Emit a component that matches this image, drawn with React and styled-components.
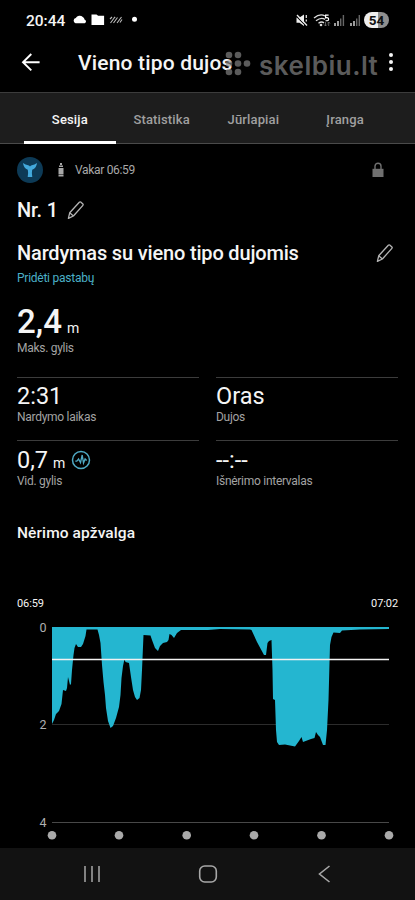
import React from "react";
import styled, { createGlobalStyle } from "styled-components";

const tabs = ["Sesija", "Statistika", "Jūrlapiai", "Įranga"];

// dive profile: x on screen, y as distance below the surface line
const profile = [
  [52, 97], [54, 93], [56, 87], [59, 84], [61.5, 77], [63, 63], [66, 64],
  [67, 61], [68, 50], [70, 58], [71, 57], [72, 43], [73.5, 28], [74.5, 21],
  [76, 17], [78, 20], [81, 20], [83, 17], [85.5, 9], [86.5, 2.5], [97.5, 2.5],
  [99, 8], [100.5, 16], [102, 38], [103.5, 55], [105, 68], [106, 81],
  [108, 94], [110.5, 101], [113, 99], [116, 91], [119, 80], [120.5, 68],
  [121.5, 51], [123, 39], [124.5, 32], [125.5, 35], [129, 36], [131, 50],
  [133, 63], [135, 70], [137, 73], [139.5, 71], [141, 63], [142, 43],
  [143.5, 8], [150.5, 8.5], [152, 13], [155, 21], [158, 24], [160, 19],
  [163, 16], [167, 15], [168.5, 13], [169.5, 7], [171.5, 8], [174, 11],
  [177, 6], [181, 3], [208, 3], [220, 2], [250, 2.5], [251.5, 3], [257, 15],
  [264, 28], [266, 28], [267.5, 16], [269, 14], [271.5, 13], [272.5, 43],
  [273, 72], [275, 73], [276, 103], [277, 115], [279, 118], [285, 117.5],
  [295, 119.5], [299, 114], [301.5, 110], [303, 115], [311, 112],
  [314.5, 111], [316, 105], [318, 108], [320, 110], [323, 118], [325.5, 118],
  [327, 103], [328.5, 73], [330, 18], [331.5, 10], [333.5, 5.5], [340, 6],
  [342, 3.5], [360, 2.5], [389, 2],
];

const SURFACE = 16;
const profilePoints = [[52, 0], ...profile, [389, 0]]
  .map(([x, y]) => `${x},${y + SURFACE}`)
  .join(" ");

const Pencil = () => (
  <svg width="18" height="20" viewBox="0 0 18 20" fill="none" stroke="#b4b4b4" strokeWidth="1.3" strokeLinejoin="round">
    <path d="M1.4 18.4 L2.7 12.8 L12.3 2.2 Q13 1.5 13.7 2.1 L15.9 4 Q16.5 4.6 15.9 5.3 L6.4 16 Z M2.7 12.8 L6.4 16" />
  </svg>
);

const StatusIcons = () => (
  <svg width="96" height="20" viewBox="294 10 96 20">
    <path d="M296.5 17.5h3l4.5-3v11.4l-4.5-3.2h-3z" fill="#eee" />
    <path d="M296 15.8l9.5 9.5" stroke="#000" strokeWidth="1.2" />
    <path d="M297 15l10 10.5" stroke="#eee" strokeWidth="1.3" />
    <path d="M306.3 15v3M306.3 19.5v2" stroke="#ddd" strokeWidth="1.3" />
    <g fill="none" stroke="#ddd" strokeWidth="1.4">
      <path d="M314 18q6-5 11-2M316 20.8q5-4 9-1.5M318.5 23.3q3-2.2 5.5-.5" />
    </g>
    <circle cx="321" cy="25" r="1.3" fill="#ddd" />
    <path d="M328.6 15.2h-3v2.6q3-.5 3 1.4t-3 1.5" stroke="#fff" strokeWidth="1.2" fill="none" />
    <path d="M325.5 22v4M324 24.5l1.5 1.5 1.5-1.5M328.7 26v-4M327.4 23.4l1.3-1.4 1.3 1.4" stroke="#777" strokeWidth=".8" fill="none" />
    <g strokeWidth="1.4">
      <path d="M335 23v3M338 21v5M351 23v3M354 21v5" stroke="#ddd" />
      <path d="M340.7 18.5V26M343.4 15v11M356.7 18.5V26M359.3 15v11" stroke="#666" />
    </g>
  </svg>
);

const NotificationIcons = () => (
  <svg width="66" height="14" viewBox="72 14 66 14">
    <path d="M75.5 24.3a2.7 2.7 0 0 1 .3-5.200 4.2 4.2 0 0 1 7-1 3 3 0 0 1 1.7 2.4 2 2 0 0 1 .2 3.8z" fill="#fff" />
    <path d="M91.5 15.5h5l1.6 1.3h6V26H91.5z" fill="#fff" />
    <path d="M110.5 24l4-5.5M113.5 24l4-5.5M117 24l4.5-6M110 20l2-2M120 23.5l2-3M114 19l1.2-1" stroke="#bbb" strokeWidth="1.1" />
    <circle cx="134.5" cy="20.3" r="2.5" fill="#fff" />
  </svg>
);

export default function App() {
  return (
    <>
      <GlobalStyle />
      <Screen>
        <StatusBar>
          <Clock>20:44</Clock>
          <NotificationIcons />
          <StatusRight>
            <StatusIcons />
            <Battery>54</Battery>
          </StatusRight>
        </StatusBar>

        <AppBar>
          <svg width="20" height="22" viewBox="0 0 20 22" fill="none" stroke="#fff" strokeWidth="1.9">
            <path d="M10.3 2 2 10.2l8.3 8.2M2 10.2h16.6" />
          </svg>
          <AppTitle>Vieno tipo dujos</AppTitle>
          <MenuDots>
            <i />
            <i />
            <i />
          </MenuDots>
          <Watermark>
            <svg width="26" height="26" viewBox="0 0 26 26" fill="#8c8c8c">
              <circle cx="4" cy="4" r="3.3" />
              <circle cx="13" cy="4" r="3.3" />
              <circle cx="4" cy="12.5" r="3.3" />
              <circle cx="13" cy="12.5" r="3.3" />
              <circle cx="22" cy="12.5" r="3.3" />
              <circle cx="4" cy="21" r="3.3" />
              <circle cx="13" cy="21" r="3.3" />
            </svg>
            <span>skelbiu.lt</span>
          </Watermark>
        </AppBar>

        <TabBar>
          {tabs.map((tab, i) => (
            <Tab key={tab} $active={i === 0}>
              {tab}
            </Tab>
          ))}
        </TabBar>

        <Content>
          <MetaRow>
            <svg width="26" height="26" viewBox="0 0 26 26">
              <circle cx="13" cy="13" r="13" fill="#0d3a56" />
              <path d="M6 6q2.500 2 5.200 2.300 1.300.2 1.800 1.200.5-1 1.800-1.200Q17.500 8 20 6q-.5 5-4.800 6.800-.7 3 .1 7.200h-4.600q.8-4.200.1-7.200Q6.500 11 6 6z" fill="#43a9dc" />
            </svg>
            <Tank width="6" height="14" viewBox="0 0 6 14" fill="#a8a8a8">
              <path d="M2 0h2v2H2zM1 2.5h4V4H1zM.5 5h5v6.5h-5zM.5 12h5v1.5h-5z" />
            </Tank>
            <MetaText>Vakar 06:59</MetaText>
            <Lock width="12" height="16" viewBox="0 0 12 16">
              <path d="M3 7.5V4.2a3 3 0 0 1 6 0v3.3" fill="none" stroke="#707070" strokeWidth="1.4" />
              <path d="M.5 6.8h11V15H.5z" fill="#707070" />
            </Lock>
          </MetaRow>

          <DiveNumber>
            <Heading>Nr. 1</Heading>
            <Pencil />
          </DiveNumber>
          <TitleRow>
            <Heading>Nardymas su vieno tipo dujomis</Heading>
            <Pencil />
          </TitleRow>
          <NotesLink>Pridėti pastabų</NotesLink>

          <MaxDepth>
            <BigValue>2,4</BigValue>
            <Unit>m</Unit>
          </MaxDepth>
          <Label $height="14px">Maks. gylis</Label>

          <Stats>
            <Stat>
              <Value>2:31</Value>
              <Label>Nardymo laikas</Label>
            </Stat>
            <Stat>
              <Value>Oras</Value>
              <Label>Dujos</Label>
            </Stat>
            <Stat $top="7px">
              <Value>
                0,7<Unit>m</Unit>
                <Pulse width="20" height="20" viewBox="0 0 20 20" fill="none" stroke="#4fa9c4" strokeWidth="1.5">
                  <circle cx="10" cy="10" r="8.5" />
                  <path d="M4.3 11.2h1.5l1.8-2.2 1.9 3.7L11.2 5l1.3 8 1.6-4 1.6 1.5" strokeWidth="1.3" />
                </Pulse>
              </Value>
              <Label>Vid. gylis</Label>
            </Stat>
            <Stat $top="7px">
              <Value>--:--</Value>
              <Label>Išnėrimo intervalas</Label>
            </Stat>
          </Stats>

          <SectionTitle>Nėrimo apžvalga</SectionTitle>
          <TimeRange>
            <span>06:59</span>
            <span>07:02</span>
          </TimeRange>
        </Content>

        <Chart width="415" height="237" viewBox="0 0 415 237">
          <path d="M52 113.5h337" stroke="#2c2c2c" />
          <path d="M52 211.5h337" stroke="#484848" />
          <path d="M52 16.5h337" stroke="#5d8f9a" />
          <polygon points={profilePoints} fill="#24b6d0" />
          <path d="M52 48.5h337" stroke="#f2f2f2" strokeWidth="1.3" />
          <text x="46.5" y="20.5">0</text>
          <text x="46.5" y="118">2</text>
          <text x="46.5" y="215.5">4</text>
          {[52, 119, 186.7, 254, 321.5, 389].map((x) => (
            <circle key={x} cx={x} cy="224.3" r="4.3" fill="#aaa" />
          ))}
        </Chart>

        <NavBar>
          <svg width="18" height="18" viewBox="0 0 18 18" stroke="#a8a8a8" strokeWidth="1.5">
            <path d="M2 1v16M9 1v16M16 1v16" />
          </svg>
          <svg width="20" height="20" viewBox="0 0 20 20" fill="none" stroke="#a8a8a8" strokeWidth="1.6">
            <rect x="1.7" y="2" width="16.6" height="16" rx="5" />
          </svg>
          <svg width="18" height="18" viewBox="0 0 18 18" fill="none" stroke="#a8a8a8" strokeWidth="1.6">
            <path d="M14.5 1 4.5 9l10 8" />
          </svg>
        </NavBar>
      </Screen>
    </>
  );
}

const GlobalStyle = createGlobalStyle`
  * {
    box-sizing: border-box;
  }
  body {
    margin: 0;
    background: #000;
    font-family: Roboto, "Noto Sans", sans-serif;
    color: #f5f5f5;
  }
  svg {
    display: block;
    flex-shrink: 0;
  }
`;

const Screen = styled.div`
  width: 415px;
  height: 900px;
  display: flex;
  flex-direction: column;
  background: #000;
  overflow: hidden;
`;

const StatusBar = styled.div`
  height: 40px;
  padding: 0 26px;
  display: flex;
  align-items: center;
`;

const Clock = styled.span`
  padding-top: 1px;
  font-size: 15.5px;
  font-weight: 500;
  line-height: 20px;
  width: 46px;
`;

const StatusRight = styled.div`
  display: flex;
  align-items: center;
  margin-left: auto;
`;

const Battery = styled.span`
  width: 25px;
  height: 16px;
  margin-left: -26px;
  border-radius: 8px;
  background: linear-gradient(90deg, #eee 54%, #8f8f8f 54%);
  color: #111;
  font-size: 13.5px;
  font-weight: 700;
  line-height: 17px;
  text-align: center;
`;

const AppBar = styled.header`
  position: relative;
  height: 52px;
  padding: 0 20px 7px 21px;
  display: flex;
  align-items: center;
`;

const AppTitle = styled.h1`
  margin: 0 0 0 37px;
  font-size: 21px;
  font-weight: 500;
  line-height: 28px;
  letter-spacing: 0.17px;
`;

const MenuDots = styled.div`
  margin-left: auto;
  padding: 0 2px 2px;
  display: flex;
  flex-direction: column;
  gap: 3px;

  i {
    width: 4px;
    height: 4px;
    border-radius: 50%;
    background: #f5f5f5;
  }
`;

const Watermark = styled.div`
  position: absolute;
  left: 225px;
  top: 11px;
  display: flex;
  opacity: 0.65;

  span {
    margin-left: 8px;
    font-family: Inter, sans-serif;
    font-size: 26px;
    font-weight: 600;
    line-height: 30px;
    letter-spacing: 0.5px;
    color: #8c8c8c;
  }
`;

const TabBar = styled.nav`
  height: 52px;
  padding: 0 24px;
  display: grid;
  grid-template-columns: repeat(4, 1fr);
  background: #1d1d1d;
  border-top: 1px solid #3c3c3c;
  box-shadow: inset 0 -1px #4a4a4a;
`;

const Tab = styled.div`
  display: flex;
  align-items: center;
  justify-content: center;
  padding-top: 4px;
  font-size: 13px;
  font-weight: 500;
  letter-spacing: 0.15px;
  color: ${({ $active }) => ($active ? "#f5f5f5" : "#a0a0a0")};
  border-bottom: 3px solid ${({ $active }) => ($active ? "#fff" : "transparent")};
`;

const Content = styled.main`
  padding: 0 17px;
`;

const MetaRow = styled.div`
  height: 52px;
  display: flex;
  align-items: center;
`;

const Tank = styled.svg`
  margin-left: 15px;
`;

const MetaText = styled.span`
  margin-left: 11px;
  font-size: 12px;
  letter-spacing: -0.32px;
  color: #a8a8a8;
`;

const Lock = styled.svg`
  margin: 0 14px 0 auto;
`;

const DiveNumber = styled.div`
  height: 28px;
  display: flex;
  align-items: center;
  gap: 9px;
`;

const Heading = styled.h2`
  margin: 0;
  font-size: 20px;
  font-weight: 500;
  line-height: 28px;
  letter-spacing: -0.17px;
`;

const TitleRow = styled.div`
  height: 30px;
  margin-top: 14px;
  padding-right: 4px;
  display: flex;
  align-items: center;
  justify-content: space-between;
`;

const NotesLink = styled.div`
  margin-top: 2px;
  font-size: 12px;
  line-height: 16px;
  letter-spacing: -0.25px;
  color: #4bb0c8;
`;

const MaxDepth = styled.div`
  height: 38px;
  margin-top: 17px;
  display: flex;
  align-items: baseline;
`;

const BigValue = styled.span`
  font-size: 33px;
  font-weight: 500;
  line-height: 38px;
`;

const Unit = styled.span`
  margin-left: 5px;
  font-size: 14px;
  line-height: 16px;
`;

const Label = styled.div`
  font-size: 12px;
  line-height: ${({ $height }) => $height || "18px"};
  letter-spacing: -0.28px;
  color: #a3a3a3;
`;

const Stats = styled.div`
  margin-top: 22px;
  display: grid;
  grid-template-columns: 1fr 1fr;
  column-gap: 17px;
  row-gap: 14px;
`;

const Stat = styled.div`
  height: 49px;
  padding-top: ${({ $top }) => $top || "6px"};
  border-top: 1px solid #3c3c3c;
`;

const Value = styled.div`
  height: 24px;
  display: flex;
  align-items: baseline;
  font-size: 23.5px;
  line-height: 24px;
`;

const Pulse = styled.svg`
  align-self: center;
  margin-left: 6px;
`;

const SectionTitle = styled.h3`
  margin: 32px 0 0;
  font-size: 15.5px;
  font-weight: 500;
  line-height: 24px;
  letter-spacing: 0.1px;
`;

const TimeRange = styled.div`
  margin-top: 52px;
  display: flex;
  justify-content: space-between;
  font-size: 11px;
  line-height: 14px;
  letter-spacing: -0.1px;
`;

const Chart = styled.svg`
  text {
    font-size: 12.5px;
    fill: #b0b0b0;
    text-anchor: end;
  }
`;

const NavBar = styled.footer`
  height: 52px;
  padding: 0 82px 0 83px;
  display: flex;
  align-items: center;
  justify-content: space-between;
  background: #121212;
`;
